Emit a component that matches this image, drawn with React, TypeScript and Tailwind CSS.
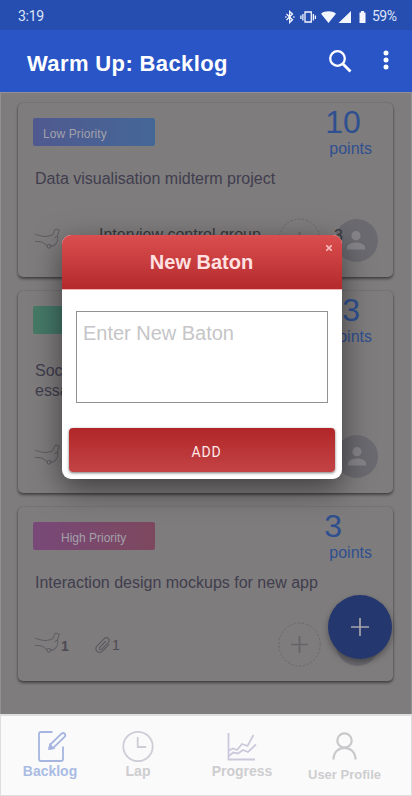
import React from "react";

function Hand() {
  return (
    <svg width="26" height="22" viewBox="0 0 26 22" fill="none" stroke="#56545b" strokeWidth="0.8" strokeLinejoin="round" strokeLinecap="round">
      <path d="M.5 6.300c4 1.200 7 2.300 10.500 2.200 2.500-.1 4.500-1 6.500-1.500L20.300 1l4 1-2 6.300-2.500 1.200M22.300 8.300l.9 1.700-.8 1.300.2 1.800-1.200 1-.4 2-1.600.6-.6 1.300-2.700-.3" />
      <path d="M.5 13.500c4-.2 7 .5 9 2.200l2.700 2" />
      <circle cx="14" cy="18.300" r="1.900" />
    </svg>
  );
}

function Clip() {
  return (
    <svg width="16" height="18" viewBox="0 0 16 18" fill="none" stroke="#5a595f" strokeWidth="1.100" strokeLinecap="round">
      <path d="M10.500 5.500 5 11.200c-1.400 1.500.5 3.400 2 2l6-6.400c3-3.200-.8-7-4-4L2.500 9.300c-4.200 4.500 1 9.800 5.500 5.300L14 8.300" />
    </svg>
  );
}

function Avatar() {
  return (
    <div className="flex size-[43px] shrink-0 items-center justify-center rounded-full bg-[#6a6a70]">
      <svg width="18" height="19" viewBox="0 0 18 19" fill="#868489">
        <circle cx="9" cy="4.700" r="4.600" />
        <path d="M0 18.500v-2.300c0-3 5-4.800 9-4.800s9 1.800 9 4.800v2.300z" />
      </svg>
    </div>
  );
}

function AddPerson() {
  return (
    <svg width="43" height="45" viewBox="0 0 43 45" fill="none" stroke="#656368">
      <ellipse cx="21.500" cy="22.500" rx="20.700" ry="21.500" strokeDasharray="2.200 1.700" strokeWidth="0.800" />
      <path d="M13 22.500h17M21.500 14v17" strokeWidth="1.700" />
    </svg>
  );
}

type CardProps = {
  size: string;
  badge: string;
  badgeLabel?: string;
  points: string;
  pointsClass: string;
  title: string;
  titleClass: string;
  children?: React.ReactNode;
};

function Card({ size, badge, badgeLabel, points, pointsClass, title, titleClass, children }: CardProps) {
  return (
    <section className={`flex shrink-0 flex-col rounded-[5px] bg-[#7f7c7d] shadow-[0_2px_3px_rgba(0,0,0,0.45),0_0_2px_rgba(0,0,0,0.2)] ${size}`}>
      <div className="flex h-[62px] justify-between pl-[15px] pr-[21px]">
        <div className={`mt-[15px] h-7 w-[122px] rounded-[2px] pt-2 text-[12px] leading-4 text-[#a3a1aa] ${badge}`}>{badgeLabel}</div>
        <div className="flex flex-col text-[#2f5090]">
          <span className={`h-[37px] text-[32px] leading-[39px] ${pointsClass}`}>{points}</span>
          <span className="text-[16px] leading-[18px]">points</span>
        </div>
      </div>
      <p className={`whitespace-pre-line pl-[17px] text-[16px] leading-5 text-[#403e4e] ${titleClass}`}>{title}</p>
      {children}
    </section>
  );
}

function NavItem({ className, label, children }: { className: string; label: string; children: React.ReactNode }) {
  return (
    <div className={`flex flex-col items-center font-bold ${className}`}>
      {children}
      <span className="whitespace-nowrap">{label}</span>
    </div>
  );
}

export default function App() {
  return (
    <div className="relative flex h-[796px] w-[412px] flex-col overflow-hidden bg-[#7f7c7d] font-['Liberation_Sans',Arial,sans-serif]">
      <div className="flex h-[30px] shrink-0 items-center bg-[#264db0] pl-[18px] pr-[14px] pt-[3px] font-['Roboto',sans-serif] text-[14px] text-[#dfe6f7]">
        <span className="tracking-[-0.300px]">3:19</span>
        <svg className="ml-auto" width="84" height="14" viewBox="0 0 84 14" fill="none" stroke="#f4f6fd">
          <path d="m1.500 4 6 5.800L4.700 12.500v-11L7.500 4l-6 6" strokeWidth="1.300" />
          <path d="M.2 7h1.300M8.200 7h1.300" strokeWidth="1.300" />
          <path d="M20 2h6.300v10H20zM17.900 4v6.500M28.400 4v6.500M15.900 5.500v3.500M30.400 5.500v3.500" strokeWidth="1.300" />
          <path d="M36 3.700c4-3.200 11-3.200 15 0L43.500 13zM53.500 13 66 1v12zM74.500 2.500H76V1h3v1.500h1.500V13h-6z" fill="#f4f6fd" stroke="none" />
        </svg>
        <span className="ml-[3px] w-[26px] tracking-[-0.500px]">59%</span>
      </div>
      <header className="flex h-[62px] shrink-0 items-center bg-[#2955c6] pl-[27px] pr-[23px] text-white">
        <h1 className="mt-[5px] whitespace-nowrap text-[22px] font-bold tracking-[0.380px]">Warm Up: Backlog</h1>
        <svg className="mb-px ml-auto" width="24" height="24" viewBox="0 0 24 24" fill="none" stroke="white">
          <circle cx="9.500" cy="9.500" r="7.300" strokeWidth="2.300" />
          <path d="m14.500 14.500 8 8" strokeWidth="2.800" />
        </svg>
        <svg className="mb-[3px] ml-[31px]" width="6" height="20" viewBox="0 0 6 20" fill="white">
          <circle cx="3" cy="2.900" r="2.500" /><circle cx="3" cy="10" r="2.500" /><circle cx="3" cy="17" r="2.500" />
        </svg>
      </header>
      <main className="flex h-[622px] shrink-0 flex-col gap-[14px] border-x border-t border-[#929092] bg-[#7f7c7d] pl-[17px] pt-[10px]">
        <Card size="h-[174px] w-[375px]" badge="bg-linear-to-r from-[#4f5990] to-[#446797] pl-[10px] tracking-[0.100px]" badgeLabel="Low Priority" points="10" pointsClass="-ml-[4px]" title="Data visualisation midterm project" titleClass="mt-1">
          <div className="mt-auto flex h-[57px] items-start pl-[17px]">
            <div className="mt-2"><Hand /></div>
            <span className="ml-[38px] mt-1 w-[162px] whitespace-nowrap text-[16px] leading-[22px] text-[#38373b]">Interview control group</span>
            <div className="-mt-[2px] ml-[17px] shrink-0"><AddPerson /></div>
            <span className="relative -mr-[10px] ml-[13px] mt-[6px] text-[16px] leading-5 text-[#38373b]">3</span>
            <div className="-mt-px ml-[2px]"><Avatar /></div>
          </div>
        </Card>
        <Card size="h-[202px] w-[375px]" badge="bg-linear-to-r from-[#457a66] to-[#426d73]" points="3" pointsClass="ml-[13px]" title={"Sociology and culture research methods on\nessay"} titleClass="mt-[8px] tracking-[-0.020px]">
          <div className="mt-auto flex h-[57px] items-start pl-[17px]">
            <div className="mt-2"><Hand /></div>
            <div className="-mt-px ml-[274px]"><Avatar /></div>
          </div>
        </Card>
        <Card size="h-[174px] w-[375px]" badge="bg-linear-to-r from-[#784878] to-[#7d485e] pl-[28px]" badgeLabel="High Priority" points="3" pointsClass="-ml-[5px]" title="Interaction design mockups for new app" titleClass="mt-1">
          <div className="mt-auto flex h-[57px] items-start pl-[17px] text-[#4d4b56]">
            <div className="mt-2"><Hand /></div>
            <b className="mt-[12px] w-[8px] text-[14px] leading-5">1</b>
            <div className="ml-[26px] mt-[12px]"><Clip /></div>
            <span className="ml-px mt-[11px] w-[8px] text-[14px] leading-5">1</span>
            <div className="-mt-[2px] ml-[158px]"><AddPerson /></div>
            <div className="-mt-px ml-[15px]"><Avatar /></div>
          </div>
        </Card>
      </main>
      <nav className="flex h-[82px] shrink-0 border border-t-2 border-[#dedddf] bg-[#fafafa] text-[14px] leading-4 text-[#cecdd0]">
        <NavItem className="ml-[22px] w-[54px] pt-[14px] text-[#aabce4]" label="Backlog">
          <svg className="mb-px ml-1" width="30" height="32" viewBox="0 0 30 32" fill="none" stroke="#a5b5df" strokeWidth="1.800">
            <path d="M15.500 2H4Q2 2 2 4v25q0 2 2 2h20q2 0 2-2V16.500" />
            <path d="m12.300 18.800.8-4L24.500 3.700q1.800-1.500 3.200 0 1.300 1.500-.2 3.200L16 18.200z" /><path d="m12.300 18.800.8-4 3.200 3.500z" fill="#a5b5df" />
          </svg>
        </NavItem>
        <NavItem className="ml-[45px] w-[32px] pt-[14px]" label="Lap">
          <svg className="mb-px" width="32" height="32" viewBox="0 0 32 32" fill="none" stroke="#cdccd7" strokeWidth="1.800"><circle cx="16" cy="16.500" r="14.700" /><path d="M15.700 7v10h8.500" /></svg>
        </NavItem>
        <NavItem className="ml-[58px] w-[60px] pt-[16px]" label="Progress">
          <svg className="mb-px" width="30" height="30" viewBox="0 0 30 30" fill="none" stroke="#cbc9dc" strokeWidth="1.800">
            <path d="M1.500 1v26.500H28M2 18.500l4-2 4 1.500 5-6 5.500 2L26.500 3M2 24l4-3.500 5 1 5-3.500 5 2L29 12.500" />
          </svg>
        </NavItem>
        <NavItem className="ml-[36px] w-[73px] pt-[15px] text-[13px]" label="User Profile">
          <svg className="-ml-[2px] mb-[6px]" width="26" height="30" viewBox="0 0 26 30" fill="none" stroke="#c9c8ca" strokeWidth="2.200"><circle cx="13.500" cy="9.500" r="7.200" /><path d="M2.500 28.500c0-15.500 22-15.500 22 0" /></svg>
        </NavItem>
      </nav>
      <div className="absolute left-[327.500px] top-[595px] flex size-16 items-center justify-center rounded-full bg-[#24386f] shadow-[0_3px_6px_rgba(0,0,0,0.35)]">
        <svg width="18" height="18" viewBox="0 0 18 18" stroke="#a5a4aa" strokeWidth="1.700"><path d="M0 9h18M9 0v18" /></svg>
      </div>
      <div role="dialog" className="absolute left-[62px] top-[235px] flex h-[244px] w-[280px] flex-col overflow-hidden rounded-[9px] bg-white shadow-[0_10px_30px_rgba(0,0,0,0.5)]">
        <div className="relative flex h-[55px] shrink-0 items-center justify-center border-b border-[#f3b3b6] bg-linear-to-b from-[#db4e50] to-[#b4292b] text-[20px] font-bold text-[#ffe1e1]">
          <span className="ml-[-1px]">New Baton</span>
          <svg className="absolute right-[10px] top-[10px]" width="6" height="6" viewBox="0 0 6 6" stroke="#f6b4b5" strokeWidth="1.800"><path d="m0 0 6 6M6 0 0 6" /></svg>
        </div>
        <div className="mx-[14px] mt-[21px] h-[92px] border border-[#929295] pl-[6px] pt-[9px] text-[20px] leading-6 tracking-[-0.020px] text-[#c5c5c7]">Enter New Baton</div>
        <button className="mx-[7px] mt-[25px] h-[44px] rounded-[4px] bg-linear-to-b from-[#b12528] to-[#c34345] pl-[9px] pt-[5px] font-['Roboto',sans-serif] text-[14px] tracking-[0.900px] text-[#ffe8e8] shadow-[0_1px_3px_rgba(0,0,0,0.55)]">ADD</button>
      </div>
    </div>
  );
}
